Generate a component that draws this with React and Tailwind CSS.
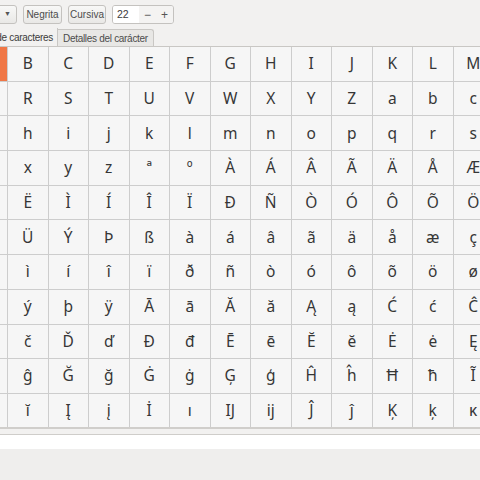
import React from "react";

// Latin script block as gucharmap lists it
function latinChars() {
  const codes = [];
  for (let c = 0x41; c <= 0x5a; c++) codes.push(c);
  for (let c = 0x61; c <= 0x7a; c++) codes.push(c);
  codes.push(0xaa, 0xba);
  for (let c = 0xc0; c <= 0xd6; c++) codes.push(c);
  for (let c = 0xd8; c <= 0xf6; c++) codes.push(c);
  for (let c = 0xf8; c <= 0x13b; c++) codes.push(c);
  return codes.map((c) => String.fromCodePoint(c));
}

function ToolButton({ children, width }) {
  return (
    <div
      className={
        "h-[19px] flex items-center justify-center rounded-[3px] border border-[#c4c2bf] bg-gradient-to-b from-[#f8f8f7] to-[#e9e8e6] text-[10px] text-[#4c4c4c] " +
        width
      }
    >
      {children}
    </div>
  );
}

export default function App() {
  const chars = latinChars();

  return (
    <div className="w-[480px] h-[480px] overflow-hidden bg-[#f2f1f0] flex flex-col font-['Noto_Sans',sans-serif] text-[#3c3c3c]">
      {/* toolbar */}
      <div className="h-[29px] flex items-center gap-[6px] shrink-0 font-['Liberation_Sans',sans-serif]">
        <div className="w-[60px] ml-[-43px] h-[19px] rounded-[3px] border border-[#c4c2bf] bg-gradient-to-b from-[#f8f8f7] to-[#e9e8e6] flex items-center justify-end pr-[5px]">
          <span className="text-[7px] text-[#555]">▼</span>
        </div>
        <ToolButton width="w-[39px]">Negrita</ToolButton>
        <ToolButton width="w-[38px]">Cursiva</ToolButton>
        <div className="h-[19px] w-[62px] flex rounded-[3px] border border-[#c4c2bf] overflow-hidden text-[10.5px]">
          <div className="flex-1 bg-white flex items-center pl-[4px] text-[#3c3c3c]">22</div>
          <div className="w-[17px] bg-[#f4f3f2] flex items-center justify-center text-[#555] text-[12px]">−</div>
          <div className="w-[17px] bg-[#f4f3f2] flex items-center justify-center text-[#555] text-[12px]">+</div>
        </div>
      </div>

      {/* tabs */}
      <div className="h-[18px] flex items-end shrink-0 border-b border-[#c9c7c4] text-[10px] tracking-[-0.3px] font-['Liberation_Sans',sans-serif]">
        <div className="w-[58px] h-[18px] overflow-hidden whitespace-nowrap flex justify-end items-center pr-[4px] bg-[#f2f1f0] border-r border-[#c9c7c4] text-[#3c3c3c]">
          Tabla de caracteres
        </div>
        <div className="h-[17px] px-[5px] flex items-center bg-[#e8e7e5] border-r border-t border-[#c9c7c4] rounded-tr-[3px] text-[#4c4c4c]">
          Detalles del carácter
        </div>
      </div>

      {/* character grid */}
      <div className="h-[382px] overflow-hidden shrink-0 border-b-2 border-[#d0cecb]">
        <div className="ml-[-32.5px] grid grid-cols-[repeat(16,40.5px)] auto-rows-[34.7px]">
          {chars.map((ch, i) => (
            <div
              key={i}
              className={
                "flex items-center justify-center border-r border-b border-[#cdcdcd] text-[15.5px] " +
                (i === 0 ? "bg-[#f07746] text-white" : "bg-[#f6f6f6] text-[#363636]")
              }
            >
              {ch}
            </div>
          ))}
        </div>
      </div>

      {/* text entry */}
      <div className="mt-[5px] h-[15px] bg-white border-t border-[#cfcdca] shrink-0"></div>
      <div className="flex-1 bg-[#efeeed]"></div>
    </div>
  );
}
